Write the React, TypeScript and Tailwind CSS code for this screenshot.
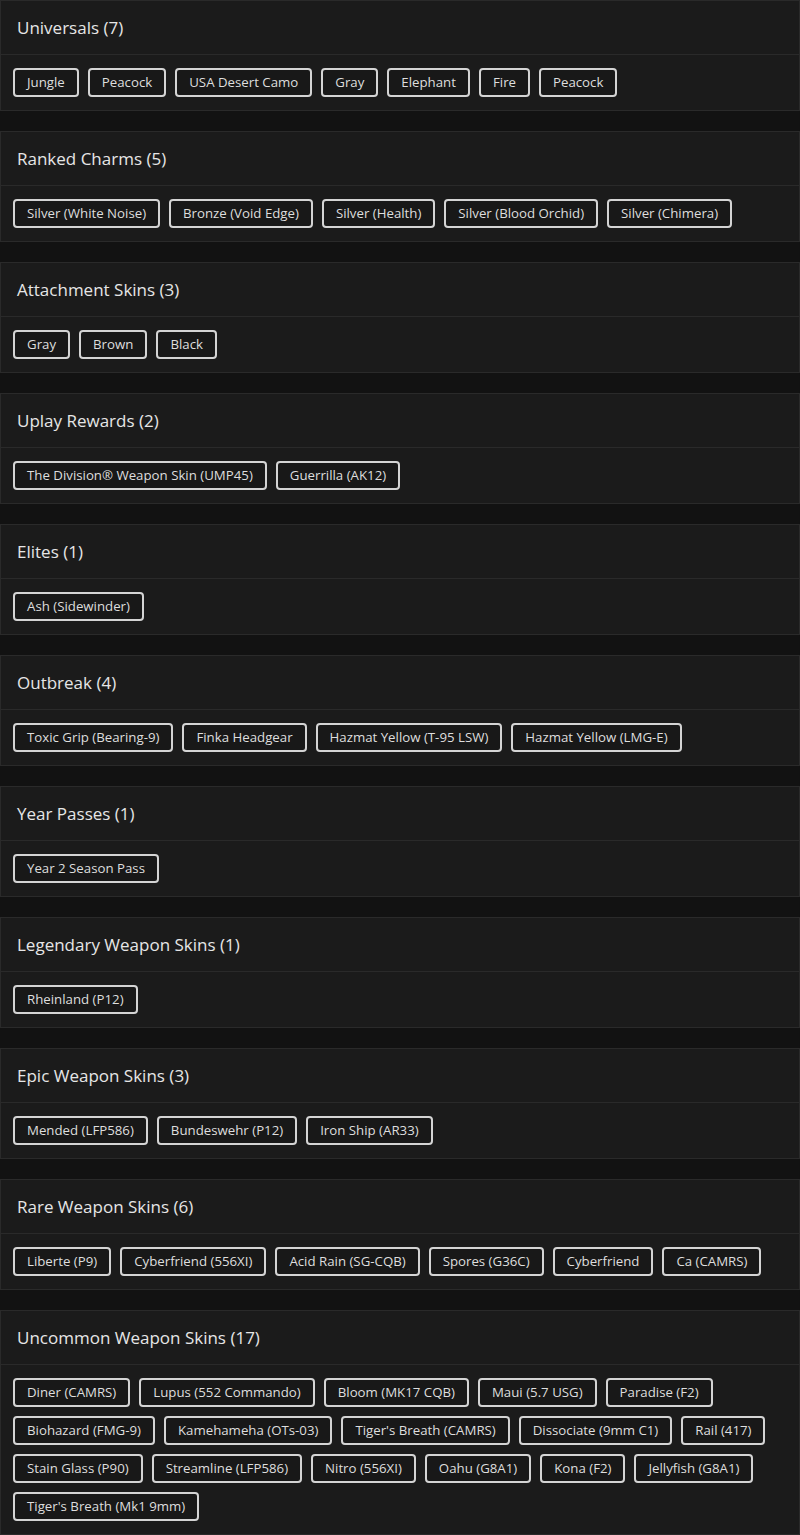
const sections: { title: string; items: string[] }[] = [
  {
    title: "Universals",
    items: ["Jungle", "Peacock", "USA Desert Camo", "Gray", "Elephant", "Fire", "Peacock"],
  },
  {
    title: "Ranked Charms",
    items: [
      "Silver (White Noise)",
      "Bronze (Void Edge)",
      "Silver (Health)",
      "Silver (Blood Orchid)",
      "Silver (Chimera)",
    ],
  },
  { title: "Attachment Skins", items: ["Gray", "Brown", "Black"] },
  {
    title: "Uplay Rewards",
    items: ["The Division® Weapon Skin (UMP45)", "Guerrilla (AK12)"],
  },
  { title: "Elites", items: ["Ash (Sidewinder)"] },
  {
    title: "Outbreak",
    items: [
      "Toxic Grip (Bearing-9)",
      "Finka Headgear",
      "Hazmat Yellow (T-95 LSW)",
      "Hazmat Yellow (LMG-E)",
    ],
  },
  { title: "Year Passes", items: ["Year 2 Season Pass"] },
  { title: "Legendary Weapon Skins", items: ["Rheinland (P12)"] },
  {
    title: "Epic Weapon Skins",
    items: ["Mended (LFP586)", "Bundeswehr (P12)", "Iron Ship (AR33)"],
  },
  {
    title: "Rare Weapon Skins",
    items: [
      "Liberte (P9)",
      "Cyberfriend (556XI)",
      "Acid Rain (SG-CQB)",
      "Spores (G36C)",
      "Cyberfriend",
      "Ca (CAMRS)",
    ],
  },
  {
    title: "Uncommon Weapon Skins",
    items: [
      "Diner (CAMRS)",
      "Lupus (552 Commando)",
      "Bloom (MK17 CQB)",
      "Maui (5.7 USG)",
      "Paradise (F2)",
      "Biohazard (FMG-9)",
      "Kamehameha (OTs-03)",
      "Tiger's Breath (CAMRS)",
      "Dissociate (9mm C1)",
      "Rail (417)",
      "Stain Glass (P90)",
      "Streamline (LFP586)",
      "Nitro (556XI)",
      "Oahu (G8A1)",
      "Kona (F2)",
      "Jellyfish (G8A1)",
      "Tiger's Breath (Mk1 9mm)",
    ],
  },
];

const Chip = ({ label }: { label: string }) => (
  <span className="h-[29px] flex items-center rounded-[4px] border-2 border-[#d4d4d4] bg-[#181818] px-3 text-[13.25px] text-[#dedede] whitespace-nowrap">
    {label}
  </span>
);

const App = () => {
  return (
    <main
      className="min-h-screen bg-[#121212] flex flex-col gap-[20px]"
      style={{ fontFamily: '"Open Sans", "Liberation Sans", sans-serif' }}
    >
      {sections.map((s) => (
        <section key={s.title} className="border border-[#2a2a2a] bg-[#1b1b1b]">
          <div className="h-[54px] flex items-center px-4 border-b border-[#2a2a2a]">
            <h2 className="text-[17px] font-medium text-[#e6e6e6]">
              {s.title} ({s.items.length})
            </h2>
          </div>
          <div className="flex flex-wrap gap-[9px] px-3 py-[13px]">
            {s.items.map((it, i) => (
              <Chip key={i} label={it} />
            ))}
          </div>
        </section>
      ))}
    </main>
  );
};

export default App;
